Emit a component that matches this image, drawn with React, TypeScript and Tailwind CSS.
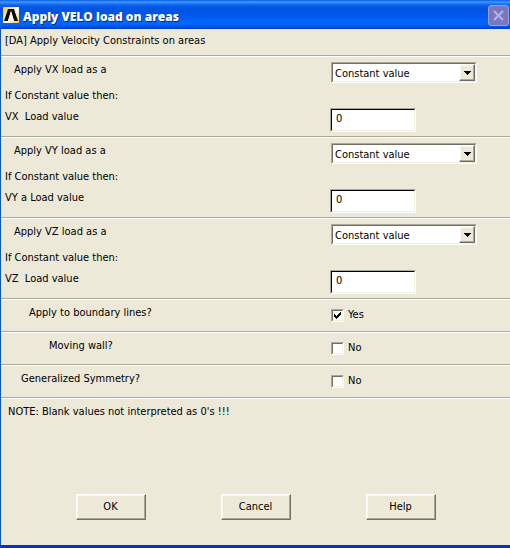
import { useState } from "react";

type Axis = { id: string; loadLabel: string; valueLabel: string };
type Toggle = { id: string; label: string; pad: string };

const axes: Axis[] = [
  { id: "vx", loadLabel: "Apply VX load as a", valueLabel: "VX  Load value" },
  { id: "vy", loadLabel: "Apply VY load as a", valueLabel: "VY a Load value" },
  { id: "vz", loadLabel: "Apply VZ load as a", valueLabel: "VZ  Load value" },
];

const toggles: Toggle[] = [
  { id: "boundary", label: "Apply to boundary lines?", pad: "pl-7" },
  { id: "wall", label: "Moving wall?", pad: "pl-12" },
  { id: "symmetry", label: "Generalized Symmetry?", pad: "pl-5" },
];

// Classic two-tone bevels
const sunken =
  "border border-t-[#aca899] border-l-[#aca899] border-r-white border-b-white";
const sunkenInner =
  "border border-t-[#716f64] border-l-[#716f64] border-r-[#f1efe2] border-b-[#f1efe2]";
const raised =
  "border border-t-white border-l-white border-r-[#716f64] border-b-[#716f64] shadow-[inset_-1px_-1px_0_#aca899,inset_1px_1px_0_#f8f7f0]";
const section = "border-t border-[#aca899] shadow-[inset_0_1px_0_#fff]";
const columns = "grid grid-cols-[minmax(0,329px)_1fr]";

function TitleBar() {
  return (
    <header className="flex h-[29px] items-center bg-[linear-gradient(#0a5ee8_0px,#3f96ff_2px,#0a62ee_5px,#0054e0_8px,#0057ea_15px,#0066ff_21px,#0064fa_25px,#0046d2_28px,#0038bd_29px)] pl-[3px] pr-px">
      <svg width="16" height="16" viewBox="0 0 16 16" className="shrink-0" aria-hidden="true">
        <defs>
          <linearGradient id="logo" x1="0" y1="0" x2="1" y2="1">
            <stop offset="0" stopColor="#ffb91c" />
            <stop offset="0.45" stopColor="#fff4cf" />
            <stop offset="0.6" stopColor="#fffbe9" />
            <stop offset="1" stopColor="#ffc02b" />
          </linearGradient>
        </defs>
        <rect width="16" height="16" fill="url(#logo)" />
        <path d="M1 14 5 2h6l4 12h-4L8 4 5 14z" fill="#0a0a0a" />
        <path d="M5 14 8 4l3 10z" fill="#fffbe9" />
      </svg>
      <h1 className="ml-1 mt-1 flex-1 whitespace-nowrap font-['Open_Sans',sans-serif] text-[12px] font-extrabold leading-4 text-white [text-shadow:1px_1px_0_#0a2a80]">
        Apply VELO load on areas
      </h1>
      <button
        type="button"
        aria-label="Close"
        className="mt-0.5 flex size-[21px] items-center justify-center rounded-[3px] border border-[#9c9ede] bg-[#7777c2]"
      >
        <svg width="13" height="13" viewBox="0 0 13 13" aria-hidden="true">
          <path d="M2 2l9 9M11 2l-9 9" stroke="#b3b5e8" strokeWidth="2" />
        </svg>
      </button>
    </header>
  );
}

function AxisSection({ axis }: { axis: Axis }) {
  const [value, setValue] = useState("0");

  return (
    <section className={`${section} ${columns} h-[81px]`}>
      <div className="pl-1">
        <label htmlFor={`${axis.id}-mode`} className="mt-1.5 block pl-[9px]">
          {axis.loadLabel}
        </label>
        <p className="mt-2.5">If Constant value then:</p>
        <label htmlFor={`${axis.id}-value`} className="mt-[5px] block whitespace-pre">
          {axis.valueLabel}
        </label>
      </div>
      <div>
        <div className={`${sunken} relative ml-px mt-1.5 w-[146px]`}>
          <select
            id={`${axis.id}-mode`}
            className={`${sunkenInner} block h-[19px] w-full appearance-none bg-white pl-0.5 pr-4 pt-0.5 leading-4`}
          >
            <option>Constant value</option>
            <option>Table</option>
          </select>
          <span className={`${raised} pointer-events-none absolute right-px top-px flex h-[17px] w-4 items-center justify-center bg-[#ece9d8]`}>
            <svg width="7" height="4" viewBox="0 0 7 4" shapeRendering="crispEdges" aria-hidden="true">
              <path d="M0 0h7v1H6v1H5v1H4v1H3V3H2V2H1V1H0z" />
            </svg>
          </span>
        </div>
        <div className={`${sunken} mt-[25px] w-[86px]`}>
          <input
            id={`${axis.id}-value`}
            value={value}
            onChange={(e) => setValue(e.target.value)}
            className="block h-[22px] w-full border border-b-[#f1efe2] border-l-black border-r-[#f1efe2] border-t-black bg-white pb-1 pl-1 outline-none"
          />
        </div>
      </div>
    </section>
  );
}

function ToggleRow({ toggle }: { toggle: Toggle }) {
  const [on, setOn] = useState(toggle.id === "boundary");

  return (
    <section className={`${section} ${columns} h-[33px]`}>
      <label htmlFor={toggle.id} className={`mt-1.5 ${toggle.pad}`}>
        {toggle.label}
      </label>
      <div className="ml-px mt-2 flex h-4 items-center gap-1">
        <span className={`${sunken} relative flex`}>
          <input
            id={toggle.id}
            type="checkbox"
            checked={on}
            onChange={(e) => setOn(e.target.checked)}
            className={`${sunkenInner} size-[11px] appearance-none bg-white`}
          />
          {on && (
            <svg
              width="7"
              height="7"
              viewBox="0 0 7 7"
              shapeRendering="crispEdges"
              className="pointer-events-none absolute left-0.5 top-0.5"
              aria-hidden="true"
            >
              <path d="M0 2h1v1h1v1h1V3h1V2h1V1h1V0h1v3H6v1H5v1H4v1H3v1H2V6H1V5H0z" />
            </svg>
          )}
        </span>
        <span>{on ? "Yes" : "No"}</span>
      </div>
    </section>
  );
}

export default function App() {
  return (
    <div className="flex min-h-screen flex-col border-b-[3px] border-[#0034d0] bg-[#ece9d8] font-['Tahoma','DejaVu_Sans_Condensed','DejaVu_Sans',sans-serif] text-[11px] leading-4 text-black">
      <TitleBar />
      <form
        className="flex flex-1 flex-col border-l border-[#0054e3]"
        onSubmit={(e) => e.preventDefault()}
      >
        <p className="h-[26px] pl-1 pt-1">[DA] Apply Velocity Constraints on areas</p>
        {axes.map((axis) => (
          <AxisSection key={axis.id} axis={axis} />
        ))}
        {toggles.map((toggle) => (
          <ToggleRow key={toggle.id} toggle={toggle} />
        ))}
        <p className={`${section} pl-[7px] pt-1.5`}>NOTE: Blank values not interpreted as 0's !!!</p>
        <div className="mt-auto flex justify-center gap-[75px] pb-[25px]">
          {["OK", "Cancel", "Help"].map((name) => (
            <button key={name} type="button" className={`${raised} h-[26px] w-[70px]`}>
              {name}
            </button>
          ))}
        </div>
      </form>
    </div>
  );
}
